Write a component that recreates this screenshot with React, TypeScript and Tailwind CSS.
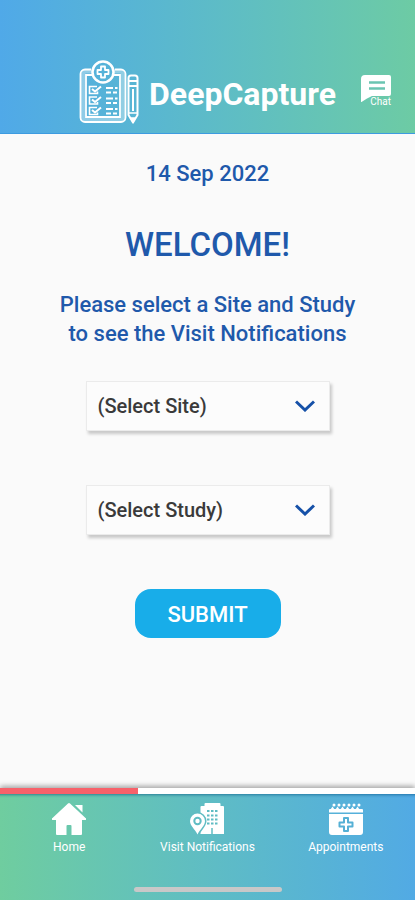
import { useState } from 'react';
import type { ReactNode } from 'react';
import { clsx } from 'clsx';

/* ================= ICONS ================= */
const LogoIcon = () => (
  <svg viewBox="0 0 60 64" className="h-16 w-[60px]" fill="none" stroke="white" strokeWidth="2" aria-hidden="true">
    {/* Board */}
    <path d="M13 11.500H7a3 3 0 0 0-3 3V57a3 3 0 0 0 3 3h34a3 3 0 0 0 3-3V14.500a3 3 0 0 0-3-3h-6" strokeWidth="4" strokeOpacity="0.35" />
    <path d="M12 9.500H6a4.500 4.500 0 0 0-4.500 4.500v43.500A4.500 4.500 0 0 0 6 62h36a4.500 4.500 0 0 0 4.500-4.500V14A4.500 4.500 0 0 0 42 9.500h-6" strokeWidth="1.800" />
    <path d="M13 15H7v42h34V15h-6" strokeWidth="1.800" />
    <circle cx="24" cy="12" r="10.500" strokeWidth="2.500" />
    <path
      d="M22 6.500h4v3.500h3.500v4h-3.500v3.500h-4V14h-3.500v-4H22z"
      strokeWidth="1.800"
      strokeLinejoin="round"
    />
    {/* Check rows */}
    {[27, 37.5, 48].map((y) => (
      <g key={y} transform={`translate(0 ${y})`}>
        <path d="M18-0.500h-7.500v7h8V4.500" strokeWidth="1.600" />
        <path d="M13 2l3 2.500 6-5" />
        <path d="M27 1h7m2 0h2.500M27 5.500h5m2 0h4" strokeWidth="1.800" />
      </g>
    ))}
    {/* Pencil */}
    <path d="M49.500 55V18a2.500 2.500 0 0 1 2.500-2.500h4a2.500 2.500 0 0 1 2.500 2.500v37L54 62.500z" strokeLinejoin="round" />
    <path d="M49.500 21h9M49.500 26h9M54 29v22" />
    <path d="M49.500 53h9M52 58h4l-2 4z" fill="white" strokeWidth="1.500" />
  </svg>
);

const ChatIcon = () => (
  <svg viewBox="0 0 30 27" className="h-[27px] w-[30px]" aria-hidden="true">
    <path d="M4 0h24a2 2 0 0 1 2 2v17a2 2 0 0 1-2 2H11l-5 2.500L0.500 27H0V4a4 4 0 0 1 4-4z" fill="white" />
    <path d="M8 7.500h16M8 13.500h16" stroke="#6bc5b2" strokeWidth="2.500" />
  </svg>
);

const HomeIcon = () => (
  <svg viewBox="0 0 34 32" className="h-8 w-[34px]" fill="white" aria-hidden="true">
    <path d="M16 0.500a1.500 1.500 0 0 1 2 0L33.500 15a1 1 0 0 1-0.500 2h-3v14a1 1 0 0 1-1 1H19.500v-9a1 1 0 0 0-1-1h-3a1 1 0 0 0-1 1v9H5a1 1 0 0 1-1-1V17H1a1 1 0 0 1-0.500-2z" />
    <path d="M23 2h7.500v7.500z" />
  </svg>
);

const VisitIcon = () => (
  <svg viewBox="0 0 35 32" className="h-8 w-[35px]" aria-hidden="true">
    <path d="M10.500 31V4a1 1 0 0 1 1-1h3V1a1 1 0 0 1 1-1h14a1 1 0 0 1 1 1v2H33a1 1 0 0 1 1 1v27z" fill="white" />
    {[8, 12.5, 16.5, 20.5].map((y) => (
      <path key={y} d={`M17 ${y}h2.500m1.500 0h2.500m1.500 0h2.500`} stroke="#5fbcc3" strokeWidth="2" />
    ))}
    <path d="M22 31v-6" stroke="#5fbcc3" strokeWidth="1.500" />
    <path
      d="M7.500 31.500C5 26 0 23 0 18a7.500 7.500 0 0 1 15 0c0 5-5 8-7.500 13.500z"
      fill="white"
      stroke="#5fbcc3"
      strokeWidth="3"
      paintOrder="stroke"
    />
    <circle cx="7.500" cy="18" r="3.200" fill="white" stroke="#5fbcc3" strokeWidth="2" />
  </svg>
);

const CalendarIcon = () => (
  <svg viewBox="0 0 34 32" className="h-8 w-[34px]" aria-hidden="true">
    <path d="M1 6h32a1 1 0 0 1 1 1v2.500H0V7a1 1 0 0 1 1-1zM0 11h34v18a3 3 0 0 1-3 3H3a3 3 0 0 1-3-3z" fill="white" />
    {/* Binder rings */}
    {[5, 10, 15, 20, 25, 30].map((x) => (
      <g key={x} fill="white">
        <circle cx={x} cy="2" r="1.500" />
        <path d={`M${x - 3.5} 6.500l2-3 2 3z`} />
      </g>
    ))}
    <path
      d="M15 15h4v4.500h4.500v4H19V28h-4v-4.500h-4.500v-4H15z"
      fill="white"
      stroke="#55b0d5"
      strokeWidth="2"
      strokeLinejoin="round"
    />
  </svg>
);

/* ================= SELECT ================= */
const SelectBox = ({ id, label, options }: { id: string; label: string; options: string[] }) => (
  <div className="grid w-[244px] items-center border border-[#ebebeb] bg-[#fcfcfc] shadow-[2px_3px_3px_rgba(0,0,0,0.2)]">
    <select
      id={id}
      aria-label={label}
      className="col-start-1 row-start-1 h-12 w-full appearance-none bg-transparent px-[11px] text-xl font-medium text-[#3a3a3a] outline-none"
    >
      <option>({label})</option>
      {options.map((option) => (
        <option key={option}>{option}</option>
      ))}
    </select>
    <svg
      viewBox="0 0 20 12"
      className="pointer-events-none col-start-1 row-start-1 mr-[14px] h-3 w-5 justify-self-end"
      fill="none"
      stroke="#1651a8"
      strokeWidth="3"
      aria-hidden="true"
    >
      <path d="M1 1.500l9 8.500 9-8.500" />
    </svg>
  </div>
);

const navItems: { id: string; label: string; icon: ReactNode }[] = [
  { id: 'home', label: 'Home', icon: <HomeIcon /> },
  { id: 'visits', label: 'Visit Notifications', icon: <VisitIcon /> },
  { id: 'appointments', label: 'Appointments', icon: <CalendarIcon /> },
];

const App = () => {
  const [active, setActive] = useState('home');

  return (
    <div className="flex min-h-screen flex-col bg-[#fafafa] font-['Roboto',sans-serif]">
      {/* ================= HEADER ================= */}
      <header className="grid grid-cols-[1fr_auto_1fr] items-center border-b border-[#3d9be0] bg-linear-to-r from-[#50a9e8] to-[#6dcba4] pt-[60px] pb-[9px]">
        <div className="col-start-2 flex items-center gap-[10px]">
          <LogoIcon />
          <h1 className="pt-1 text-[32px] leading-10 font-bold text-white">DeepCapture</h1>
        </div>
        <button type="button" className="mr-6 mb-1 flex flex-col items-end justify-self-end">
          <ChatIcon />
          <span className="-mt-1 text-[10px] leading-2 text-white">Chat</span>
        </button>
      </header>

      {/* ================= CONTENT ================= */}
      <main className="flex flex-1 flex-col items-center pt-[26px] text-center text-[#1f59ab]">
        <p className="text-[22px] leading-7 font-medium">14 Sep 2022</p>
        <h2 className="mt-8 text-[33px] leading-[50px] font-medium">WELCOME!</h2>
        <p className="mt-5 text-[22px] leading-[29px] font-medium">
          Please select a Site and Study
          <br />
          to see the Visit Notifications
        </p>
        <form className="mt-[33px] flex flex-col items-center" onSubmit={(e) => e.preventDefault()}>
          <div className="flex flex-col gap-[54px]">
            <SelectBox id="site" label="Select Site" options={['Site 1', 'Site 2']} />
            <SelectBox id="study" label="Select Study" options={['Study 1', 'Study 2']} />
          </div>
          <button
            type="submit"
            className="mt-[54px] h-[49px] w-[146px] rounded-2xl bg-[#18ade9] pt-px text-[22px] font-medium text-white"
          >
            SUBMIT
          </button>
        </form>
      </main>

      {/* ================= BOTTOM NAV ================= */}
      <footer className="bg-linear-to-r from-[#6fcd9f] to-[#52aae4] pb-2 shadow-[0_-2px_5px_rgba(0,0,0,0.35)]">
        <nav className="grid grid-cols-3">
          {navItems.map((item) => (
            <button
              key={item.id}
              type="button"
              onClick={() => setActive(item.id)}
              className={clsx(
                'flex flex-col items-center border-t-6 pt-[9px] shadow-[inset_0_4px_3px_-3px_rgba(0,80,130,0.6)]',
                active === item.id ? 'border-[#f7616a]' : 'border-white'
              )}
            >
              {item.icon}
              <span className="mt-1 text-xs leading-4 text-white">{item.label}</span>
            </button>
          ))}
        </nav>
        <div className="mx-auto mt-8 h-[5px] w-[148px] rounded-full bg-[#c8c8c8]" />
      </footer>
    </div>
  );
};

export default App;
